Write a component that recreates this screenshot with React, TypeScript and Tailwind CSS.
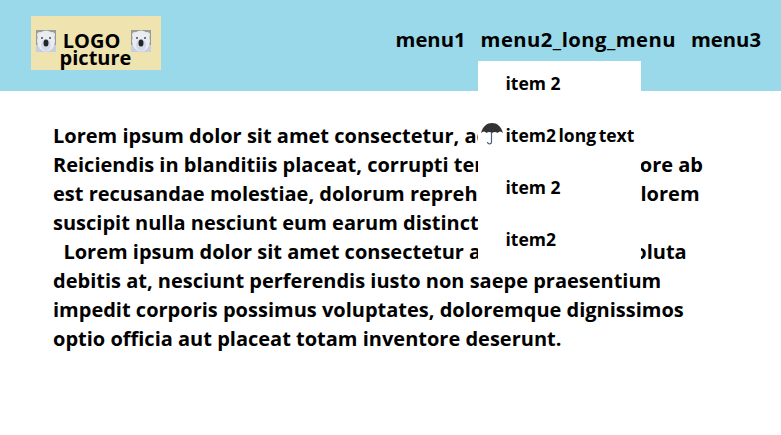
const Bear = () => (
  <svg width="20" height="22" viewBox="0 0 20 22" className="shrink-0">
    <rect width="20" height="22" fill="#9a9a96" />
    <rect y="15" width="20" height="7" fill="#c6cfe0" />
    <circle cx="4" cy="5" r="3" fill="#e6e8ea" />
    <circle cx="16" cy="5" r="3" fill="#e6e8ea" />
    <ellipse cx="10" cy="11" rx="9" ry="10.500" fill="#e9edf2" />
    <ellipse cx="10" cy="15" rx="5" ry="6" fill="#d3d9e6" />
    <circle cx="6" cy="8" r="1" fill="#4a4a4e" />
    <circle cx="14" cy="8" r="1" fill="#4a4a4e" />
    <ellipse cx="10" cy="13" rx="2.500" ry="3.500" fill="#22252c" />
  </svg>
);

const Umbrella = () => (
  <svg width="22" height="24" viewBox="0 0 22 24" className="absolute left-[3px] top-[61px]">
    <path d="M0 11C2 4 6 1 11 1s9 3 11 10c-2-2-4-2-5.500 0-1.500-1.500-3.500-1.500-5.500 0-2-1.500-4-1.500-5.500 0C4 9 2 9 0 11z" fill="#333" />
    <path d="M10.500 10v10c0 2.500-4 2.500-4 0" fill="none" stroke="#4b6178" strokeWidth="1.200" />
  </svg>
);

const lines = [
  'Lorem ipsum dolor sit amet consectetur, adipisicing elit.',
  'Reiciendis in blanditiis placeat, corrupti tempora libero dolore ab',
  'est recusandae molestiae, dolorum reprehenderit culpa dolorem',
  'suscipit nulla nesciunt eum earum distinctio quasi.',
  '\u00a0\u00a0Lorem ipsum dolor sit amet consectetur adipisicing elit. soluta',
  'debitis at, nesciunt perferendis iusto non saepe praesentium',
  'impedit corporis possimus voluptates, doloremque dignissimos',
  'optio officia aut placeat totam inventore deserunt.',
];

const items = ['item 2', 'item2 long text', 'item 2', 'item2'];

export default function App() {
  return (
    <div className="h-[435px] w-[781px] overflow-hidden bg-white font-['Open_Sans',sans-serif] font-bold text-black">
      <header className="flex h-[91px] items-start justify-between bg-[#99d9ea] pl-[31px] pr-[20px] pt-[16px]">
        <div className="flex h-[54px] w-[130px] items-start bg-[#efe4b0] pl-[5px] pt-[14px]">
          <Bear />
          <div className="relative h-[40px] w-[75px] text-center text-[20px] leading-[24px]">
            <div className="-ml-[4px] -mt-[1px]">LOGO</div>
            <div className="absolute left-[2px] top-[16px] w-[75px]">picture</div>
          </div>
          <Bear />
        </div>
        <nav className="relative flex gap-[15px] pt-[7px] text-[20.250px] leading-[32px]">
          <span>menu1</span>
          <span className="tracking-[0.450px]">menu2_long_menu</span>
          <span>menu3</span>
          <ul className="absolute left-[82px] top-[45px] h-[212px] w-[163px] bg-white text-[17.500px] leading-[24px] tracking-normal">
            <Umbrella />
            {items.map((item, i) => (
              <li key={i} className={`h-[52px] pl-[28px] pt-[10px] ${i === 1 ? '[word-spacing:-2px]' : ''}`}>
                {item}
              </li>
            ))}
          </ul>
        </nav>
      </header>
      <main className="px-[53px] pt-[30px] text-[20px] leading-[29px]">
        {lines.map((line) => (
          <div key={line} className="whitespace-pre">{line}</div>
        ))}
      </main>
    </div>
  );
}
